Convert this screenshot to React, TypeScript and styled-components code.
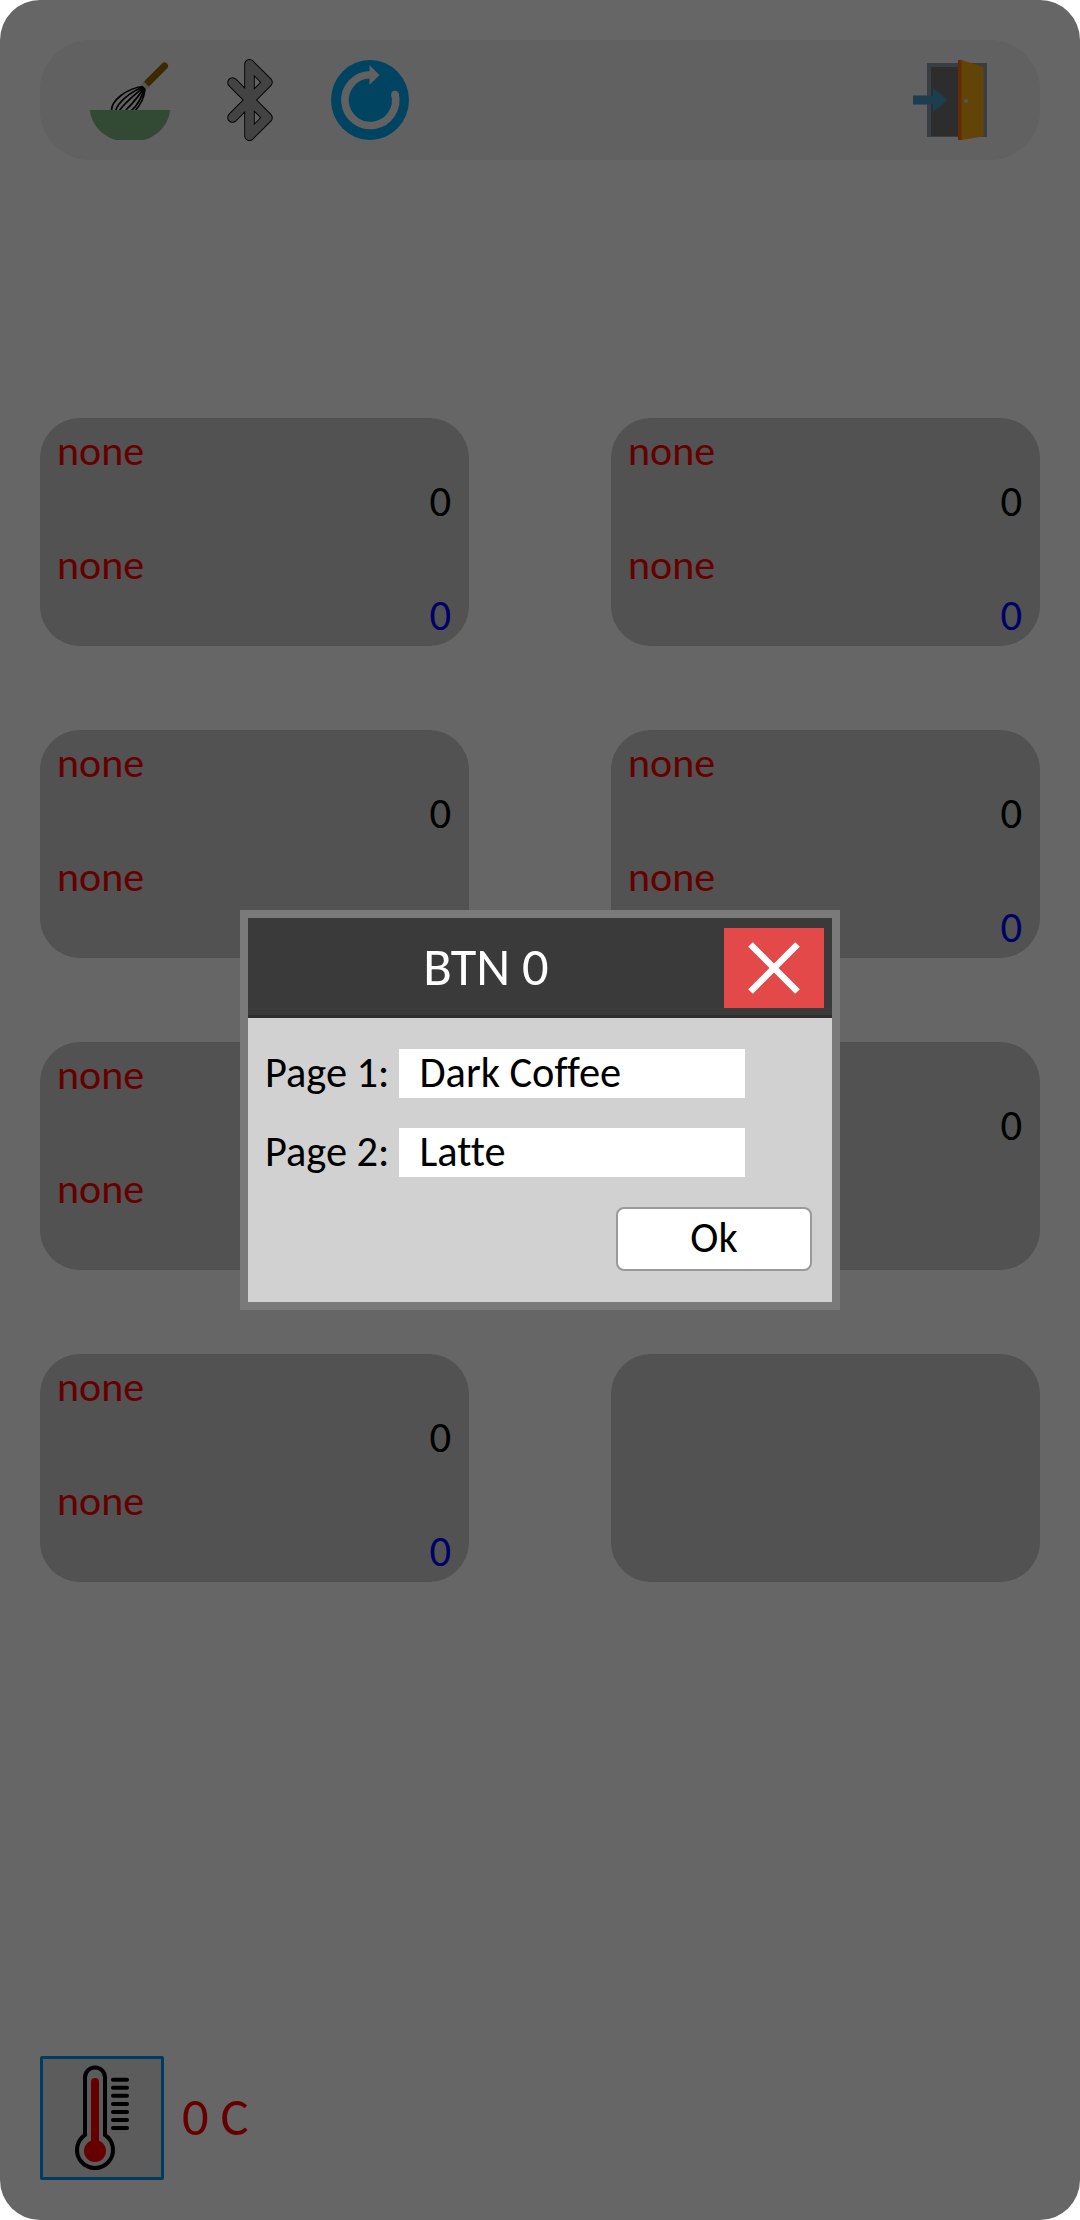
import React from "react";
import styled, { createGlobalStyle } from "styled-components";

const Global = createGlobalStyle`
  * { box-sizing: border-box; }
  body {
    margin: 0;
    background: #fff;
    font-family: Carlito, Calibri, "Open Sans", sans-serif;
    font-variant-ligatures: none;
  }
`;

const Screen = styled.div`
  width: 1080px;
  height: 2220px;
  padding: 40px;
  border-radius: 40px;
  background: #666;
  display: flex;
  flex-direction: column;
  position: relative;
`;

const Toolbar = styled.header`
  height: 120px;
  flex: none;
  border-radius: 50px;
  background: #616161;
  display: flex;
  align-items: center;
  padding: 0 50px;
`;

const Tool = styled.button<{ $gap?: number; $push?: boolean }>`
  width: 80px;
  height: 84px;
  padding: 0;
  border: 0;
  background: none;
  display: flex;
  align-items: center;
  justify-content: center;
  margin-left: ${(p) => (p.$push ? "auto" : `${p.$gap ?? 0}px`)};
`;

const Grid = styled.main`
  display: grid;
  grid-template-columns: 429px 429px;
  justify-content: space-between;
  grid-auto-rows: 228px;
  row-gap: 84px;
  margin-top: 258px;
`;

const Card = styled.section`
  border-radius: 40px;
  background: #525252;
  padding: 0 18px 0 17px;
`;

const Slot = styled.div`
  height: 114px;
  padding-top: 8px;
  display: grid;
  grid-template-rows: 50px 50px;
`;

const Name = styled.span`
  grid-row: 1;
  font-size: 42px;
  line-height: 50px;
  color: #660000;
`;

const Count = styled.span<{ $color: string }>`
  grid-row: 2;
  font-size: 42.67px;
  line-height: 50px;
  text-align: right;
  color: ${(p) => p.$color};
`;

const Footer = styled.footer`
  display: flex;
  align-items: center;
  gap: 18px;
  margin-top: auto;
`;

const Gauge = styled.div`
  width: 124px;
  height: 124px;
  border: 3px solid #003b63;
  border-radius: 2px;
  background: #5c5c5c;
`;

const Degrees = styled.span`
  padding-bottom: 2px;
  font-size: 52.5px;
  line-height: 65px;
  color: #660000;
`;

const Dialog = styled.div`
  position: absolute;
  left: 240px;
  top: 910px;
  width: 600px;
  height: 400px;
  border: 8px solid #7a7a7a;
  background: #d1d1d1;
  display: flex;
  flex-direction: column;
`;

const TitleBar = styled.div`
  height: 100px;
  background: #3a3a3a;
  border-bottom: 3px solid #2e2e2e;
  display: flex;
  align-items: flex-start;
  padding: 10px 8px 0 0;
`;

const Title = styled.h1`
  flex: 1;
  margin: 0;
  font-size: 52.5px;
  font-weight: 400;
  line-height: 79px;
  text-align: center;
  color: #fff;
`;

const Close = styled.button`
  width: 100px;
  height: 80px;
  padding: 0;
  border: 0;
  background: #e34949;
  display: flex;
  align-items: center;
  justify-content: center;
`;

const Form = styled.form`
  flex: 1;
  display: flex;
  flex-direction: column;
  padding: 31px 20px 0 17px;
`;

const Field = styled.label`
  display: flex;
  height: 49px;
  margin-bottom: 30px;
  font-size: 42.4px;
  line-height: 48px;
  color: #000;
`;

const Caption = styled.span`
  width: 134px;
  white-space: nowrap;
`;

const Value = styled.span`
  width: 346px;
  padding-left: 20.5px;
  background: #fff;
`;

const Ok = styled.button`
  align-self: flex-end;
  width: 196px;
  height: 64px;
  padding: 0 0 2px;
  border: 2px solid #999;
  border-radius: 8px;
  background: #fff;
  color: #000;
  font: inherit;
  font-size: 42.4px;
  line-height: 52px;
`;

const WhiskIcon = () => (
  <svg width="80" height="80" viewBox="0 0 80 80">
    <g fill="none" stroke="#000" strokeWidth="1.7">
      <path d="M55 26C36 28 21 41 21.5 51M55 26C40 32 28 42 25.500 51M55 26C46 34 36 41 29 51M55 26C49 37 42 44 35 51M55 26C52 38 48 45 41 51M55 26C55 38 50 45 45 51" />
    </g>
    <path d="M57.500 23L74.500 6" stroke="#3c2900" strokeWidth="7" strokeLinecap="round" />
    <path d="M53.500 21L60 28L56 29L51.500 25Z" fill="#555" />
    <path d="M0 50H80C79 64 68 76 54 80H26C12 76 1 64 0 50Z" fill="#324933" />
  </svg>
);

const BluetoothIcon = () => (
  <svg width="48" height="84" viewBox="0 0 48 84" fill="none" strokeLinecap="round" strokeLinejoin="round">
    <path d="M6.500 24.500L41.500 59.700L23.500 77.700V6.300L41.500 24.300L6.500 59.500" stroke="#000" strokeWidth="10.500" />
    <path d="M6.500 24.500L41.500 59.700L23.500 77.700V6.300L41.500 24.300L6.500 59.500" stroke="#434343" strokeWidth="8.700" />
  </svg>
);

const RefreshIcon = () => (
  <svg width="80" height="80" viewBox="0 0 80 80">
    <ellipse cx="40" cy="40" rx="39" ry="40" fill="#004461" />
    <path d="M40 14.700A25.400 25.400 0 1 0 65 34" fill="none" stroke="#616161" strokeWidth="7.600" />
    <circle cx="65" cy="34.500" r="3.800" fill="#616161" />
    <path d="M39.500 5V25L49.500 15Z" fill="#616161" />
  </svg>
);

const DoorIcon = () => (
  <svg width="80" height="80" viewBox="0 0 80 80">
    <path d="M17 3H77V77H17Z" fill="#383e42" />
    <path d="M21 7H73V76H21Z" fill="#2d2d2d" />
    <path d="M48 0H52V80H48Z" fill="#662a06" />
    <path d="M51.500 0L73.500 7V76.500L51.500 80Z" fill="#624506" />
    <circle cx="56" cy="41" r="2" fill="#555" />
    <path d="M3 35.500H23V28L37.500 40L23 52V44.500H3Z" fill="#1d3d50" />
  </svg>
);

const ThermometerIcon = () => (
  <svg width="118" height="118" viewBox="0 0 118 118">
    <path d="M42 76V18.500a10 10 0 0 1 20 0V76a18 18 0 1 1 -20 0Z" fill="none" stroke="#000" strokeWidth="4" />
    <path d="M52 23V90" stroke="#660000" strokeWidth="8" strokeLinecap="round" />
    <circle cx="52" cy="92" r="11" fill="#660000" />
    <path
      d="M70 20.700H84M70 28.700H84M70 36.800H84M70 44.900H84M70 52.900H84M70 61H84M70 69H84"
      stroke="#000"
      strokeWidth="4"
      strokeLinecap="round"
    />
  </svg>
);

const CrossIcon = () => (
  <svg width="52" height="52" viewBox="0 0 52 52">
    <path d="M2.500 2.500L49.500 49.500M49.500 2.500L2.500 49.500" stroke="#fff" strokeWidth="6.500" />
  </svg>
);

type Entry = { name?: string; count?: number };

const full: Entry[] = [
  { name: "none", count: 0 },
  { name: "none", count: 0 },
];

const cards: Entry[][] = [
  full,
  full,
  [{ name: "none", count: 0 }, { name: "none" }],
  full,
  [{ name: "none" }, { name: "none" }],
  [{ count: 0 }],
  full,
  [],
];

export default function App() {
  return (
    <>
      <Global />
      <Screen>
        <Toolbar>
          <Tool><WhiskIcon /></Tool>
          <Tool $gap={40}><BluetoothIcon /></Tool>
          <Tool $gap={40}><RefreshIcon /></Tool>
          <Tool $push><DoorIcon /></Tool>
        </Toolbar>
        <Grid>
          {cards.map((entries, i) => (
            <Card key={i}>
              {entries.map((entry, page) => (
                <Slot key={page}>
                  {entry.name && <Name>{entry.name}</Name>}
                  {entry.count !== undefined && (
                    <Count $color={page === 0 ? "#000" : "#000066"}>{entry.count}</Count>
                  )}
                </Slot>
              ))}
            </Card>
          ))}
        </Grid>
        <Footer>
          <Gauge><ThermometerIcon /></Gauge>
          <Degrees>0 C</Degrees>
        </Footer>
        <Dialog>
          <TitleBar>
            <Title>BTN 0</Title>
            <Close type="button"><CrossIcon /></Close>
          </TitleBar>
          <Form>
            <Field><Caption>Page 1:</Caption><Value>Dark Coffee</Value></Field>
            <Field><Caption>Page 2:</Caption><Value>Latte</Value></Field>
            <Ok type="button">Ok</Ok>
          </Form>
        </Dialog>
      </Screen>
    </>
  );
}
